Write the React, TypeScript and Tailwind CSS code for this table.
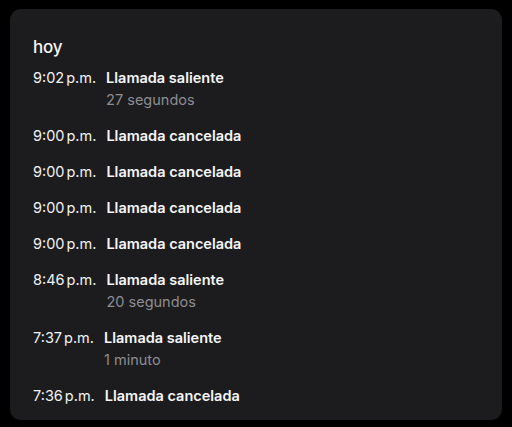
import React from "react";

type Item = { time: string; title: string; sub?: string };

const items: Item[] = [
  { time: "9:02", title: "Llamada saliente", sub: "27 segundos" },
  { time: "9:00", title: "Llamada cancelada" },
  { time: "9:00", title: "Llamada cancelada" },
  { time: "9:00", title: "Llamada cancelada" },
  { time: "9:00", title: "Llamada cancelada" },
  { time: "8:46", title: "Llamada saliente", sub: "20 segundos" },
  { time: "7:37", title: "Llamada saliente", sub: "1 minuto" },
  { time: "7:36", title: "Llamada cancelada" },
];

export default function App() {
  return (
    <div
      className="w-[512px] h-[427px] bg-black pt-[9px] pl-[10px] overflow-hidden"
      style={{ fontFamily: "Inter, 'Noto Sans', sans-serif" }}
    >
      <div className="w-[492px] h-[411px] bg-[#1c1c1e] rounded-[11px] pl-[23px] pt-[27px] pb-[15px] flex flex-col">
        <div className="text-[17px] leading-[22px] text-[#f5f5f7] font-medium tracking-[-0.2px]">hoy</div>
        <div className="mt-[10px] flex flex-col gap-[16px]">
          {items.map((it, i) => (
            <div key={i} className="flex gap-[10px]">
              <div className="text-[14.5px] leading-[20px] text-[#f2f2f2] whitespace-nowrap">
                {it.time}
                <span className="ml-[2px]">p.m.</span>
              </div>
              <div className="flex flex-col">
                <div className="text-[14.5px] leading-[20px] text-[#f5f5f7] font-semibold">{it.title}</div>
                {it.sub && (
                  <div className="mt-[2px] text-[14.5px] leading-[20px] text-[#8d8d92]">{it.sub}</div>
                )}
              </div>
            </div>
          ))}
        </div>
      </div>
    </div>
  );
}
